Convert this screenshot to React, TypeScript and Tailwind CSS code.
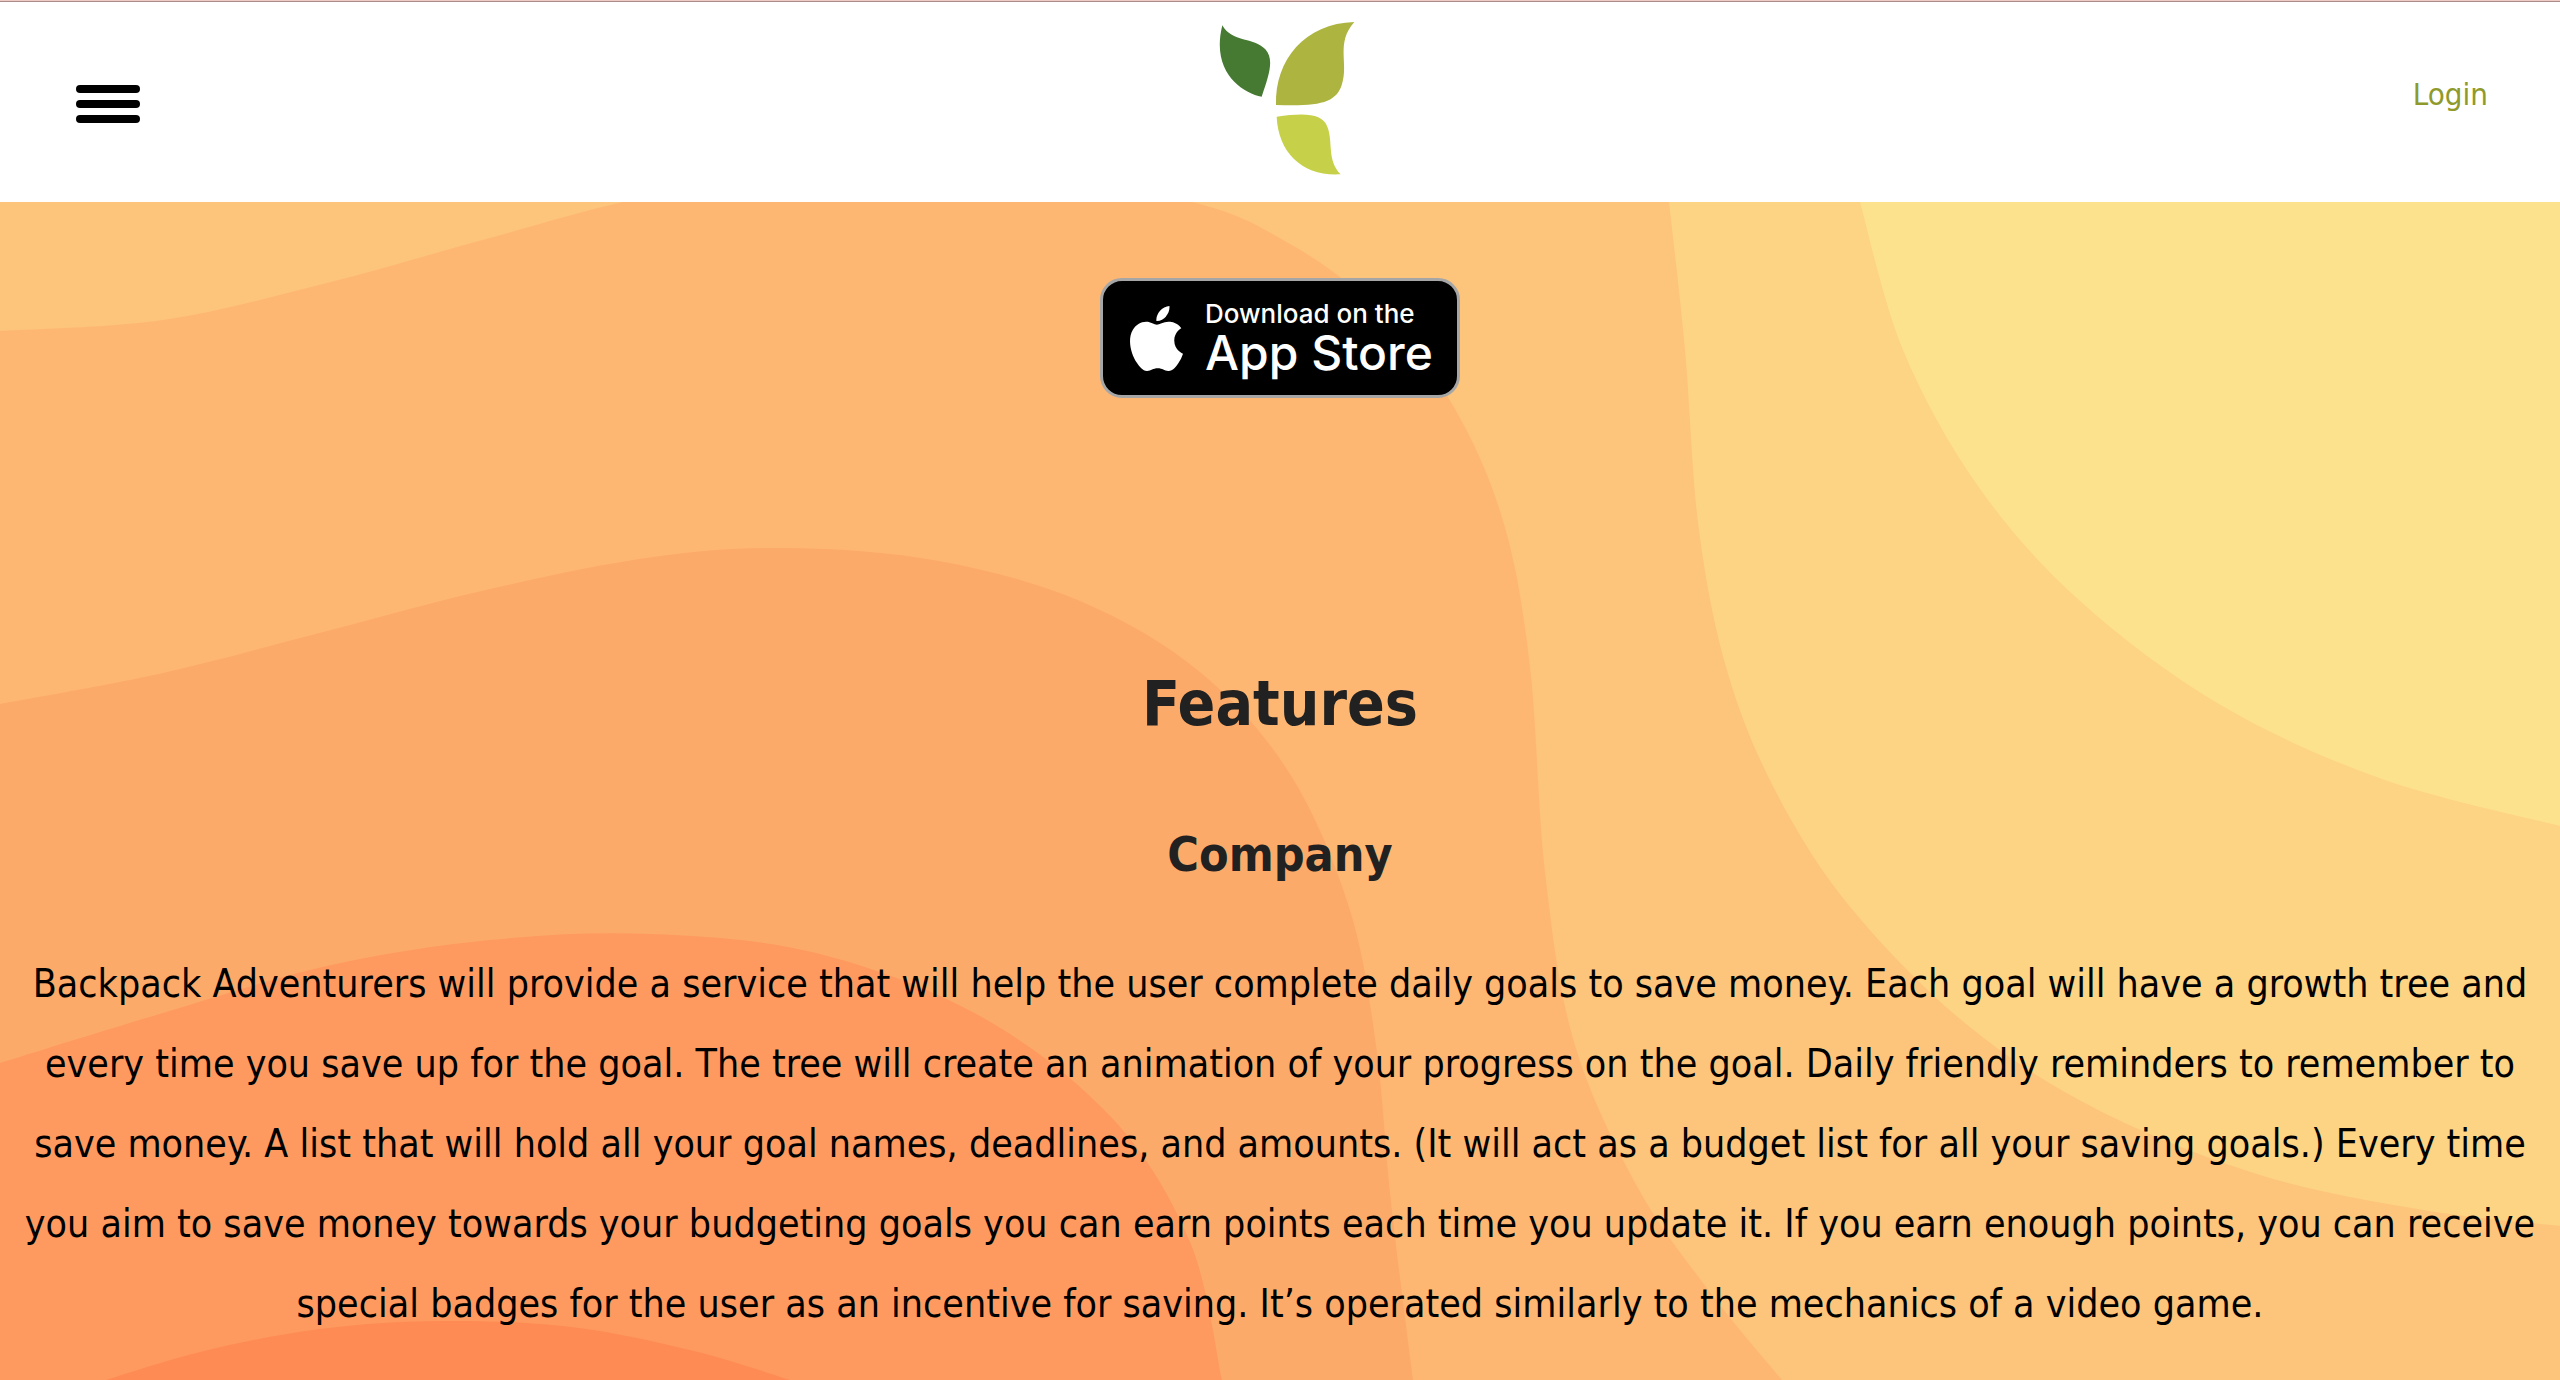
import { SiApple } from "react-icons/si";

type Point = [number, number];

/* Smooth path through the points (Catmull-Rom converted to cubic Béziers). */
function smooth(points: Point[]): string {
  let d = `M${points[0][0]} ${points[0][1]}`;
  for (let i = 0; i < points.length - 1; i++) {
    const p0 = points[i - 1] ?? points[i];
    const p1 = points[i];
    const p2 = points[i + 1];
    const p3 = points[i + 2] ?? p2;
    d += ` C${p1[0] + (p2[0] - p0[0]) / 6} ${p1[1] + (p2[1] - p0[1]) / 6} ${p2[0] - (p3[0] - p1[0]) / 6} ${p2[1] - (p3[1] - p1[1]) / 6} ${p2[0]} ${p2[1]}`;
  }
  return d;
}

const bands: { fill: string; edge: Point[]; close: string }[] = [
  {
    fill: "#fdd384",
    edge: [[1669, 0], [1685, 148], [1699, 329], [1728, 472], [1777, 592], [1851, 706], [1966, 822], [2096, 907], [2260, 973], [2423, 1008], [2560, 1024]],
    close: "V0 Z",
  },
  {
    fill: "#fde28e",
    edge: [[1860, 0], [1903, 148], [1978, 284], [2079, 398], [2219, 502], [2382, 577], [2560, 624]],
    close: "V0 Z",
  },
  {
    fill: "#feb772",
    edge: [[0, 129], [163, 118], [327, 81], [490, 36], [650, -6], [900, -50], [1176, -4], [1290, 42], [1385, 114], [1455, 207], [1504, 322], [1530, 465], [1545, 670], [1574, 840], [1638, 986], [1713, 1094], [1782, 1178]],
    close: "H0 Z",
  },
  {
    fill: "#fcaa69",
    edge: [[0, 502], [163, 471], [327, 429], [490, 387], [653, 355], [790, 346], [939, 359], [1080, 399], [1200, 470], [1290, 572], [1349, 705], [1376, 843], [1391, 1000], [1413, 1178]],
    close: "H0 Z",
  },
  {
    fill: "#fe9a5f",
    edge: [[0, 861], [163, 811], [327, 764], [490, 738], [650, 732], [816, 751], [980, 814], [1112, 916], [1190, 1040], [1222, 1178]],
    close: "H0 Z",
  },
  {
    fill: "#fe8b54",
    edge: [[106, 1178], [204, 1149], [320, 1127], [441, 1119], [571, 1125], [694, 1149], [790, 1178]],
    close: "Z",
  },
];

function Waves() {
  return (
    <svg className="absolute inset-0 h-full w-full" viewBox="0 0 2560 1178" preserveAspectRatio="none" aria-hidden="true">
      {bands.map((band) => (
        <path key={band.fill} d={`${smooth(band.edge)} ${band.close}`} fill={band.fill} />
      ))}
    </svg>
  );
}

function LeafLogo() {
  return (
    <svg className="h-[200px] w-40" viewBox="60 6 480 600" role="img" aria-label="Backpack Adventurers">
      <path d="M127 76 C155 127 222 112 256 148 C283 178 268 222 245 290 C185 278 92 215 127 76 Z" fill="#467a33" />
      <path d="M288 315 C284 180 375 70 523 66 C466 130 507 190 486 252 C470 308 420 320 288 315 Z" fill="#adb540" />
      <path d="M290 350 C375 338 427 340 442 380 C460 425 440 480 482 523 C370 530 295 460 290 350 Z" fill="#c6d149" />
    </svg>
  );
}

export default function App() {
  return (
    <div className="flex min-h-screen flex-col bg-white font-['DejaVu_Sans_Condensed','DejaVu_Sans',sans-serif]">
      <div className="h-px bg-[#eecbc5]" />
      <div className="h-px bg-[#ab8c89]" />
      <header className="grid grid-cols-3 items-center px-[72px]">
        <button type="button" aria-label="Open menu" className="flex w-fit flex-col gap-[7px] px-1 pt-1">
          <span className="h-2 w-16 rounded-full bg-black" />
          <span className="h-2 w-16 rounded-full bg-black" />
          <span className="h-2 w-16 rounded-full bg-black" />
        </button>
        <div className="flex justify-center">
          <LeafLogo />
        </div>
        <div className="flex justify-end pb-4">
          <a href="#login" className="text-[31px] leading-10 text-[#8f9a2b]">
            Login
          </a>
        </div>
      </header>

      <main className="relative grow overflow-hidden bg-[#fdc47b]">
        <Waves />
        <div className="relative flex flex-col items-center pt-[76px] pb-6 text-center">
          <a
            href="#app-store"
            className="flex h-[120px] w-[360px] items-center gap-4 rounded-[22px] border-3 border-[#a6a6a6] bg-black px-[21px] text-left font-['Inter',sans-serif] font-medium text-white"
          >
            <SiApple className="size-[65px] shrink-0" aria-hidden="true" />
            <span className="flex flex-col whitespace-nowrap">
              <span className="text-[26px] leading-[30px]">Download on the</span>
              <span className="text-5xl leading-[48px]">App Store</span>
            </span>
          </a>
          <h1 className="mt-[266px] text-[62px] leading-[80px] font-bold text-[#212121]">Features</h1>
          <h2 className="mt-[78px] text-5xl leading-[64px] font-bold text-[#212121]">Company</h2>
          <p className="mt-[58px] px-4 text-[39px] leading-[80px] text-black">
            Backpack Adventurers will provide a service that will help the user complete daily goals to save money. Each
            goal will have a growth tree and every time you save up for the goal. The tree will create an animation of
            your progress on the goal. Daily friendly reminders to remember to save money. A list that will hold all your
            goal names, deadlines, and amounts. (It will act as a budget list for all your saving goals.) Every time you
            aim to save money towards your budgeting goals you can earn points each time you update it. If you earn
            enough points, you can receive special badges for the user as an incentive for saving. It’s operated
            similarly to the mechanics of a video game.
          </p>
        </div>
      </main>
    </div>
  );
}
